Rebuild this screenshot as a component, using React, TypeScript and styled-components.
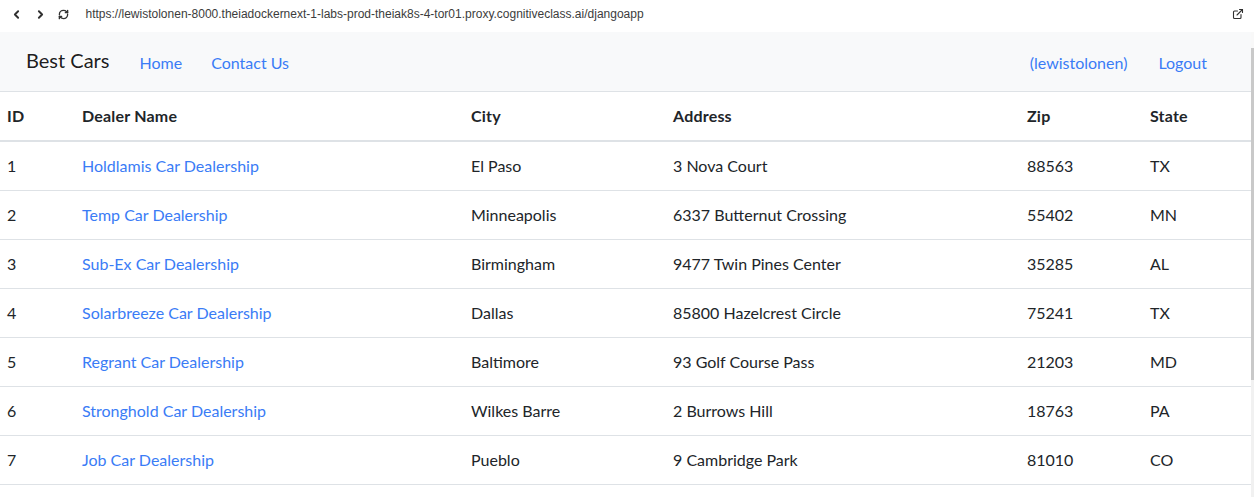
import React from "react";
import styled, { createGlobalStyle } from "styled-components";
import { ChevronLeft, ChevronRight, RefreshCw, ExternalLink } from "lucide-react";

const GlobalStyle = createGlobalStyle`
  html, body {
    margin: 0;
    padding: 0;
    height: 497px;
    overflow: hidden;
    background: #ffffff;
  }
  body {
    font-family: Lato, "Open Sans", sans-serif;
    color: #212529;
  }
  * { box-sizing: border-box; }
`;

const BrowserBar = styled.div`
  height: 32px;
  display: flex;
  align-items: center;
  padding: 0 4px 4px 5px;
  background: #ffffff;
  color: #3a3a3a;
`;

const NavIcon = styled.span`
  display: flex;
  width: 23.5px;
  justify-content: center;
  align-items: center;
  color: #303030;
`;

const Url = styled.span`
  font-family: "Liberation Sans", Arial, sans-serif;
  font-size: 12px;
  color: #3c3c3c;
  margin-left: 10px;
  flex: 1;
  white-space: nowrap;
`;

const Frame = styled.div`
  display: flex;
  height: 465px;
`;

const Page = styled.div`
  flex: 1;
  min-width: 0;
`;

const Scrollbar = styled.div`
  width: 3px;
  display: flex;
  flex-direction: column;
  background: #f1f1f1;
`;

const ScrollTop = styled.div`
  height: 16px;
  background: #f8f8f8;
`;

const ScrollThumb = styled.div`
  height: 332px;
  background: #c9c9c9;
`;

const Navbar = styled.nav`
  height: 60px;
  background: #f8f9fa;
  border-bottom: 1px solid #dee2e6;
  display: flex;
  align-items: center;
  padding: 0 44px 0 26px;
`;

const Brand = styled.span`
  font-size: 20px;
  color: rgba(0, 0, 0, 0.9);
  margin-right: 30px;
  margin-top: -4px;
`;

const NavLink = styled.a`
  font-size: 16px;
  color: #3a7cf6;
  text-decoration: none;
  margin-top: 1px;
`;

const NavGroup = styled.div<{ $right?: boolean }>`
  display: flex;
  align-items: center;
  gap: ${(p) => (p.$right ? "31px" : "29px")};
  margin-left: ${(p) => (p.$right ? "auto" : "0")};
`;

const Table = styled.table`
  width: 100%;
  border-collapse: collapse;
  table-layout: fixed;
  font-size: 16px;
`;

const Th = styled.th`
  text-align: left;
  font-weight: 700;
  height: 49px;
  padding: 11px 7px 12px;
  line-height: 24px;
  border-bottom: 2px solid #dee2e6;
  color: #212529;
  letter-spacing: 0.2px;
`;

const Td = styled.td`
  padding: 12px 7px;
  height: 49px;
  line-height: 24px;
  border-bottom: 1px solid #dee2e6;
  color: #212529;
  white-space: nowrap;
`;

const DealerLink = styled.a`
  color: #3a7cf6;
  text-decoration: none;
`;

const dealers = [
  { id: 1, name: "Holdlamis Car Dealership", city: "El Paso", address: "3 Nova Court", zip: "88563", state: "TX" },
  { id: 2, name: "Temp Car Dealership", city: "Minneapolis", address: "6337 Butternut Crossing", zip: "55402", state: "MN" },
  { id: 3, name: "Sub-Ex Car Dealership", city: "Birmingham", address: "9477 Twin Pines Center", zip: "35285", state: "AL" },
  { id: 4, name: "Solarbreeze Car Dealership", city: "Dallas", address: "85800 Hazelcrest Circle", zip: "75241", state: "TX" },
  { id: 5, name: "Regrant Car Dealership", city: "Baltimore", address: "93 Golf Course Pass", zip: "21203", state: "MD" },
  { id: 6, name: "Stronghold Car Dealership", city: "Wilkes Barre", address: "2 Burrows Hill", zip: "18763", state: "PA" },
  { id: 7, name: "Job Car Dealership", city: "Pueblo", address: "9 Cambridge Park", zip: "81010", state: "CO" },
];

const colWidths = [75, 389, 202, 354, 123];

export default function App() {
  return (
    <>
      <GlobalStyle />
      <BrowserBar>
        <NavIcon>
          <ChevronLeft size={13} strokeWidth={3.5} />
        </NavIcon>
        <NavIcon>
          <ChevronRight size={13} strokeWidth={3.5} />
        </NavIcon>
        <NavIcon>
          <RefreshCw size={11} strokeWidth={3} />
        </NavIcon>
        <Url>
          https://lewistolonen-8000.theiadockernext-1-labs-prod-theiak8s-4-tor01.proxy.cognitiveclass.ai/djangoapp
        </Url>
        <NavIcon>
          <ExternalLink size={12} strokeWidth={2.2} />
        </NavIcon>
      </BrowserBar>
      <Frame>
        <Page>
          <Navbar>
            <Brand>Best Cars</Brand>
            <NavGroup>
              <NavLink href="#">Home</NavLink>
              <NavLink href="#">Contact Us</NavLink>
            </NavGroup>
            <NavGroup $right>
              <NavLink href="#">(lewistolonen)</NavLink>
              <NavLink href="#">Logout</NavLink>
            </NavGroup>
          </Navbar>
          <Table>
            <colgroup>
              {colWidths.map((w, i) => (
                <col key={i} width={w} />
              ))}
              <col />
            </colgroup>
            <thead>
              <tr>
                <Th>ID</Th>
                <Th>Dealer Name</Th>
                <Th>City</Th>
                <Th>Address</Th>
                <Th>Zip</Th>
                <Th>State</Th>
              </tr>
            </thead>
            <tbody>
              {dealers.map((d) => (
                <tr key={d.id}>
                  <Td>{d.id}</Td>
                  <Td>
                    <DealerLink href="#">{d.name}</DealerLink>
                  </Td>
                  <Td>{d.city}</Td>
                  <Td>{d.address}</Td>
                  <Td>{d.zip}</Td>
                  <Td>{d.state}</Td>
                </tr>
              ))}
            </tbody>
          </Table>
        </Page>
        <Scrollbar>
          <ScrollTop />
          <ScrollThumb />
        </Scrollbar>
      </Frame>
    </>
  );
}
